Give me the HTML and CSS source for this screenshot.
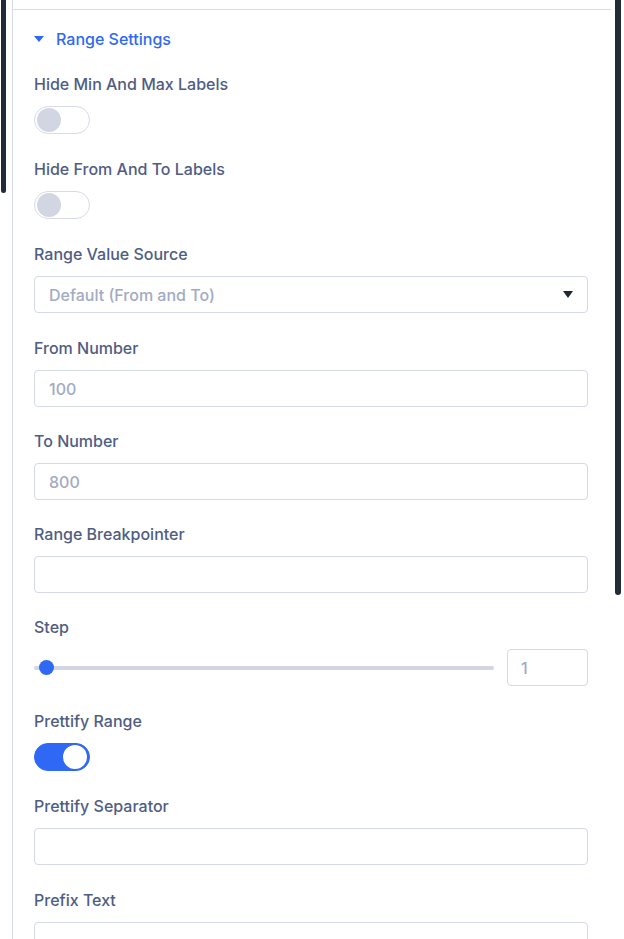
FILE: index.html
```html
<!DOCTYPE html>
<html>
<head>
<meta charset="utf-8">
<link rel="stylesheet" href="styles.css">
</head>
<body>
<div class="frame">
  <div class="scroll-left"></div>
  <div class="panel">
    <div class="panel-top"></div>
    <div class="section">
      <div class="section-head">
        <span class="caret"></span>
        <span class="section-title">Range Settings</span>
      </div>
      <div class="field field-toggle">
        <div class="label">Hide Min And Max Labels</div>
        <div class="toggle"><span class="knob"></span></div>
      </div>
      <div class="field field-toggle">
        <div class="label">Hide From And To Labels</div>
        <div class="toggle"><span class="knob"></span></div>
      </div>
      <div class="field field-wide">
        <div class="label">Range Value Source</div>
        <div class="input select"><span class="ph">Default (From and To)</span><span class="arrow"></span></div>
      </div>
      <div class="field">
        <div class="label">From Number</div>
        <div class="input"><span class="ph">100</span></div>
      </div>
      <div class="field">
        <div class="label">To Number</div>
        <div class="input"><span class="ph">800</span></div>
      </div>
      <div class="field">
        <div class="label">Range Breakpointer</div>
        <div class="input"></div>
      </div>
      <div class="field field-wide">
        <div class="label">Step</div>
        <div class="slider-row">
          <div class="slider"><span class="track"></span><span class="thumb"></span></div>
          <div class="input num"><span class="ph">1</span></div>
        </div>
      </div>
      <div class="field field-toggle">
        <div class="label">Prettify Range</div>
        <div class="toggle on"><span class="knob"></span></div>
      </div>
      <div class="field field-wide">
        <div class="label">Prettify Separator</div>
        <div class="input"></div>
      </div>
      <div class="field">
        <div class="label">Prefix Text</div>
        <div class="input"></div>
      </div>
    </div>
  </div>
  <div class="scroll-right"></div>
</div>
</body>
</html>
```

FILE: styles.css
```css
* { box-sizing: border-box; }
html, body { margin: 0; padding: 0; background: #ffffff; }
body {
  font-family: Inter, "Noto Sans", sans-serif;
  width: 624px;
  height: 939px;
  overflow: hidden;
}
.frame {
  display: flex;
  align-items: flex-start;
  height: 939px;
}
.scroll-left {
  width: 5px;
  height: 193px;
  margin-left: 1px;
  background: #222b36;
  border-radius: 0 0 3px 3px;
  flex: none;
}
.panel {
  margin-left: 6px;
  width: 599px;
  height: 939px;
  border-left: 1px solid #d6dbe7;
  flex: none;
}
.panel-top {
  height: 10px;
  border-bottom: 1px solid #d6dbe7;
}
.section {
  padding: 19px 0 0 21px;
  width: 576px;
}
.section-head {
  display: flex;
  align-items: center;
  height: 20px;
  margin-bottom: 25px;
}
.caret {
  width: 0;
  height: 0;
  border-left: 5px solid transparent;
  border-right: 5px solid transparent;
  border-top: 6px solid #2e68f5;
  margin-right: 12px;
}
.section-title {
  color: #2e68f5;
  font-size: 16px;
  font-weight: 500;
  line-height: 20px;
}
.field {
  margin-bottom: 24px;
}
.field-toggle,
.field-wide {
  margin-bottom: 25px;
}
.label {
  color: #4f5d82;
  font-size: 16px;
  font-weight: 500;
  line-height: 20px;
  margin-bottom: 12px;
}
.toggle {
  width: 56px;
  height: 28px;
  border: 1px solid #d6dbe7;
  border-radius: 14px;
  background: #ffffff;
  display: flex;
  align-items: center;
  padding: 0 2px;
}
.knob {
  width: 24px;
  height: 24px;
  border-radius: 50%;
  background: #d1d6e2;
}
.toggle.on {
  background: #2e68f5;
  border-color: #2e68f5;
  justify-content: flex-end;
}
.toggle.on .knob {
  background: #ffffff;
}
.input {
  width: 554px;
  height: 37px;
  border: 1px solid #d4d9e5;
  border-radius: 4px;
  display: flex;
  align-items: center;
  padding: 0 14px;
  background: #ffffff;
}
.ph {
  color: #a2abc2;
  font-size: 16px;
  font-weight: 500;
  line-height: 20px;
}
.select {
  justify-content: space-between;
}
.arrow {
  width: 0;
  height: 0;
  border-left: 5.5px solid transparent;
  border-right: 5.5px solid transparent;
  border-top: 7px solid #1f2733;
}
.slider-row {
  display: flex;
  align-items: center;
  width: 554px;
}
.slider {
  position: relative;
  width: 460px;
  height: 37px;
  flex: none;
  display: flex;
  align-items: center;
}
.track {
  display: block;
  width: 100%;
  height: 4px;
  background: #d1d6e2;
  border-radius: 2px;
}
.thumb {
  position: absolute;
  left: 5px;
  top: 11px;
  width: 15px;
  height: 15px;
  border-radius: 50%;
  background: #2e68f5;
}
.input.num {
  width: 81px;
  margin-left: 13px;
  padding: 0 13px;
}
.scroll-right {
  width: 6px;
  height: 595px;
  margin-left: 4px;
  background: #222b36;
  border-radius: 0 0 3px 3px;
  flex: none;
}
```
